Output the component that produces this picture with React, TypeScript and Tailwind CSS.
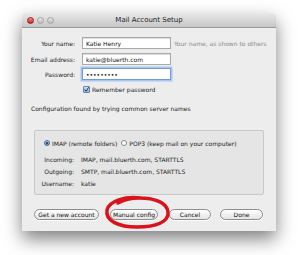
import React from 'react'

const font = { fontFamily: '"DejaVu Sans", "Liberation Sans", sans-serif' }

function Field({ label, value, focused, hint }: { label: string; value: string; focused?: boolean; hint?: string }) {
  return (
    <div className="flex items-center h-[12px]">
      <div className="w-[53px] text-right text-[6px] text-[#1a1a1a]">{label}</div>
      <div
        className={
          'ml-[7px] w-[89px] h-[12px] bg-white flex items-center px-[3px] text-[6px] text-[#111] ' +
          (focused
            ? 'border border-[#6d9ddd] shadow-[0_0_0_1.5px_#a9c6ee]'
            : 'border border-[#a8a8a8] shadow-[inset_0_1px_1px_rgba(0,0,0,0.15)]')
        }
      >
        {value}
      </div>
      {hint && <div className="ml-[3px] text-[6px] text-[#8a8a8a] whitespace-nowrap">{hint}</div>}
    </div>
  )
}

function Info({ label, value }: { label: string; value: string }) {
  return (
    <div className="flex items-center h-[12px] text-[6px] text-[#1a1a1a]">
      <div className="w-[39px] text-right">{label}</div>
      <div className="ml-[7px]">{value}</div>
    </div>
  )
}

function Btn({ label, w }: { label: string; w: string }) {
  return (
    <div
      className={
        w +
        ' h-[11px] rounded-full border border-[#8e8e8e] bg-gradient-to-b from-white to-[#e4e4e4] flex items-center justify-center text-[6px] text-[#111] shadow-[0_1px_0_rgba(255,255,255,0.8)]'
      }
    >
      {label}
    </div>
  )
}

export default function App() {
  return (
    <div className="w-[300px] h-[255px] bg-white overflow-hidden relative" style={font}>
      <div className="absolute left-[22px] top-[13px] w-[254px] h-[218px] shadow-[0_8px_18px_rgba(0,0,0,0.5)] rounded-t-[4px] flex flex-col">
        {/* title bar */}
        <div className="h-[15px] rounded-t-[4px] bg-gradient-to-b from-[#e9e9e9] to-[#c6c6c6] border-b border-[#9a9a9a] flex items-center relative">
          <div className="flex items-center gap-[3px] ml-[5px]">
            <div className="w-[7px] h-[7px] rounded-full bg-gradient-to-b from-[#f08a8a] to-[#c7222a] border border-[#9b1c1c]" />
            <div className="w-[7px] h-[7px] rounded-full bg-gradient-to-b from-[#e6e6e6] to-[#bdbdbd] border border-[#a5a5a5]" />
            <div className="w-[7px] h-[7px] rounded-full bg-gradient-to-b from-[#e6e6e6] to-[#bdbdbd] border border-[#a5a5a5]" />
          </div>
          <div className="absolute inset-0 flex items-center justify-center text-[7px] text-[#222]">Mail Account Setup</div>
        </div>

        {/* body */}
        <div className="flex-1 bg-[#ededed] flex flex-col">
          <div className="mt-[9px]">
            <Field label="Your name:" value="Katie Henry" hint="Your name, as shown to others" />
          </div>
          <div className="mt-[4px]">
            <Field label="Email address:" value="katie@bluerth.com" />
          </div>
          <div className="mt-[3px]">
            <Field label="Password:" value="•••••••••" focused />
          </div>
          <div className="mt-[4px] h-[10px] flex items-center ml-[61px] gap-[2px]">
            <div className="w-[7px] h-[7px] border border-[#6b85a8] bg-gradient-to-b from-[#cfe0f4] to-[#8fb2dc] rounded-[1px] flex items-center justify-center">
              <svg width="7" height="7" viewBox="0 0 7 7">
                <path d="M1 3.5 L3 5.8 L6.5 0.5" stroke="#1c2c48" strokeWidth="1.3" fill="none" />
              </svg>
            </div>
            <span className="text-[6px] text-[#1a1a1a]">Remember password</span>
          </div>
          <div className="mt-[10px] ml-[9px] h-[8px] flex items-center text-[6px] text-[#1a1a1a]">
            Configuration found by trying common server names
          </div>

          {/* group box */}
          <div className="mt-[18px] mx-[12px] h-[65px] border border-[#c8c8c8] bg-[#e5e5e5] rounded-[2px] flex flex-col">
            <div className="mt-[6px] h-[12px] flex items-center ml-[9px] text-[6px] text-[#1a1a1a]">
              <div className="w-[6px] h-[6px] rounded-full border border-[#4a6c9b] bg-gradient-to-b from-[#b9d2ef] to-[#5d8fcf] flex items-center justify-center">
                <div className="w-[2px] h-[2px] rounded-full bg-[#1b2a44]" />
              </div>
              <span className="ml-[2px]">IMAP (remote folders)</span>
              <div className="ml-[4px] w-[6px] h-[6px] rounded-full border border-[#8a8a8a] bg-white" />
              <span className="ml-[2px]">POP3 (keep mail on your computer)</span>
            </div>
            <div className="mt-[4px] flex flex-col">
              <Info label="Incoming:" value="IMAP, mail.bluerth.com, STARTTLS" />
              <Info label="Outgoing:" value="SMTP, mail.bluerth.com, STARTTLS" />
              <Info label="Username:" value="katie" />
            </div>
          </div>

          {/* buttons */}
          <div className="mt-[14px] mx-[12px] flex items-center">
            <Btn label="Get a new account" w="w-[65px]" />
            <div className="ml-[11px]">
              <Btn label="Manual config" w="w-[48px]" />
            </div>
            <div className="ml-[11px]">
              <Btn label="Cancel" w="w-[42px]" />
            </div>
            <div className="ml-[9px]">
              <Btn label="Done" w="w-[43px]" />
            </div>
          </div>
        </div>
      </div>

      {/* red marker ellipse */}
      <svg className="absolute left-[101px] top-[192px]" width="74" height="42" viewBox="0 0 74 42">
        <path
          d="M40 6 C24 4 8 9 6 18 C4 29 18 35 36 35 C55 35 68 30 67 20 C66 11 55 6 38 6 C30 6 22 8 17 11"
          stroke="#d9121b"
          strokeWidth="3.5"
          fill="none"
          strokeLinecap="round"
        />
      </svg>
    </div>
  )
}
